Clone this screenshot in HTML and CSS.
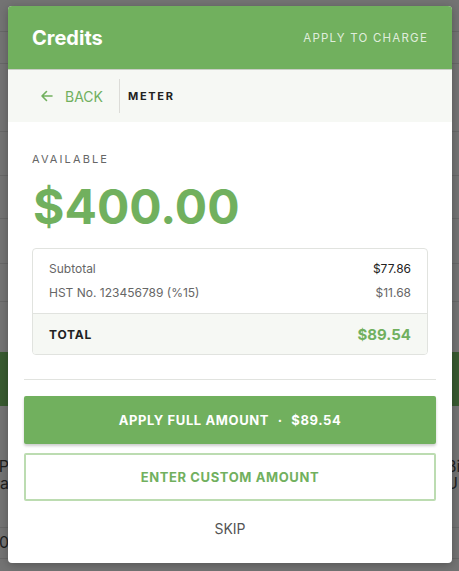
FILE: index.html
```html
<!DOCTYPE html>
<html lang="en">
<head>
  <meta charset="UTF-8">
  <meta name="viewport" content="width=device-width, initial-scale=1.0">
  <title>Credits</title>
  <link rel="stylesheet" href="styles.css">
</head>
<body>
  <!-- dimmed page behind the dialog -->
  <div class="backdrop">
    <div class="bg-line" style="top: 31px"></div>
    <div class="bg-line" style="top: 63px"></div>
    <div class="bg-line" style="top: 131px"></div>
    <div class="bg-line" style="top: 175px"></div>
    <div class="bg-line" style="top: 218px"></div>
    <div class="bg-line" style="top: 263px"></div>
    <div class="bg-line" style="top: 301px"></div>
    <div class="bg-band"></div>
    <div class="bg-line" style="top: 527px"></div>
    <div class="bg-line" style="top: 558px"></div>
    <div class="bg-text bg-left" style="top: 458px">P<br>ea</div>
    <div class="bg-text bg-left" style="top: 534px">0</div>
    <div class="bg-text bg-right" style="top: 458px">Bi<br>U</div>
  </div>

  <div class="modal">
    <div class="modal-header">
      <h1 class="modal-title">Credits</h1>
      <span class="modal-action">APPLY TO CHARGE</span>
    </div>

    <div class="subheader">
      <button class="back-btn">
        <svg width="14" height="14" viewBox="0 0 14 14" fill="none" stroke="currentColor" stroke-width="1.6" stroke-linecap="round" stroke-linejoin="round">
          <path d="M12 7H2M6.5 2.5L2 7l4.5 4.5"/>
        </svg>
        BACK
      </button>
      <span class="crumb">METER</span>
    </div>

    <div class="summary">
      <div class="label">AVAILABLE</div>
      <div class="amount">$400.00</div>

      <div class="breakdown">
        <div class="breakdown-lines">
          <div class="line">
            <span>Subtotal</span>
            <span class="line-strong">$77.86</span>
          </div>
          <div class="line">
            <span>HST No. 123456789 (%15)</span>
            <span>$11.68</span>
          </div>
        </div>
        <div class="total">
          <span class="total-label">TOTAL</span>
          <span class="total-value">$89.54</span>
        </div>
      </div>
    </div>

    <div class="actions">
      <button class="btn btn-primary">APPLY FULL AMOUNT <span class="dot">&middot;</span> $89.54</button>
      <button class="btn btn-outline">ENTER CUSTOM AMOUNT</button>
      <button class="btn-link">SKIP</button>
    </div>
  </div>
</body>
</html>
```

FILE: styles.css
```css
:root {
  --green: #71b05e;
  --green-light: #bcdcb1;
  --panel: #f6f8f4;
  --border: #e1e3df;
  --text: #222222;
  --muted: #666666;
}

* {
  box-sizing: border-box;
}

body {
  width: 459px;
  height: 571px;
  margin: 0;
  padding: 6px 7px 8px 8px;
  font-family: "Inter", "Liberation Sans", sans-serif;
  background: #737373;
  position: relative;
  overflow: hidden;
}

/* Backdrop */
.backdrop {
  position: absolute;
  inset: 0;
  z-index: 0;
}

.bg-line {
  position: absolute;
  left: 0;
  right: 0;
  height: 1px;
  background: #676767;
}

.bg-band {
  position: absolute;
  left: 0;
  right: 0;
  top: 352px;
  height: 54px;
  background: #385a30;
}

.bg-text {
  position: absolute;
  font-size: 16px;
  line-height: 17px;
  color: #1e1e1e;
}

.bg-left {
  right: 450px;
  text-align: right;
}

.bg-right {
  left: 446px;
}

/* Dialog */
.modal {
  position: relative;
  z-index: 1;
  width: 444px;
  height: 557px;
  background: #ffffff;
  border-radius: 4px;
  overflow: hidden;
  display: flex;
  flex-direction: column;
  box-shadow: 0 2px 8px rgba(0, 0, 0, 0.25);
}

.modal-header {
  height: 64px;
  padding: 0 24px;
  display: flex;
  align-items: center;
  justify-content: space-between;
  background: var(--green);
  border-bottom: 1px solid #c9cec5;
}

.modal-title {
  margin: 0;
  font-size: 20px;
  font-weight: 700;
  color: #ffffff;
}

.modal-action {
  font-size: 11.5px;
  letter-spacing: 1.2px;
  color: rgba(255, 255, 255, 0.8);
}

.subheader {
  height: 52px;
  padding: 0 16px;
  display: flex;
  align-items: center;
  background: var(--panel);
}

.back-btn {
  display: flex;
  align-items: center;
  gap: 11px;
  height: 34px;
  padding: 0 16px 0 16px;
  border: none;
  border-right: 1px solid #dcdcd8;
  background: none;
  font-family: inherit;
  font-size: 14px;
  color: var(--green);
  cursor: pointer;
}

.crumb {
  margin-left: 8px;
  font-size: 11px;
  font-weight: 700;
  letter-spacing: 1.7px;
  color: var(--text);
}

.summary {
  margin: 0 16px;
  padding: 30px 8px 24px;
  border-bottom: 1px solid var(--border);
}

.label {
  font-size: 11px;
  letter-spacing: 2.1px;
  color: var(--muted);
}

.amount {
  margin-top: 12px;
  margin-left: 1px;
  font-size: 48px;
  font-weight: 700;
  line-height: 58px;
  color: var(--green);
}

.breakdown {
  margin-top: 12px;
  border: 1px solid var(--border);
  border-radius: 4px;
  overflow: hidden;
}

.breakdown-lines {
  padding: 8px 16px 8px;
}

.line {
  display: flex;
  justify-content: space-between;
  font-size: 12px;
  line-height: 24px;
  color: var(--muted);
}

.line-strong {
  color: var(--text);
}

.total {
  height: 41px;
  padding: 0 16px;
  display: flex;
  align-items: center;
  justify-content: space-between;
  border-top: 1px solid var(--border);
  background: var(--panel);
}

.total-label {
  font-size: 12px;
  font-weight: 700;
  letter-spacing: 0.8px;
  color: var(--text);
}

.total-value {
  font-size: 15px;
  font-weight: 700;
  color: var(--green);
}

.actions {
  padding: 16px 16px 0;
  display: flex;
  flex-direction: column;
  gap: 9px;
}

.btn {
  height: 48px;
  border-radius: 2px;
  font-family: inherit;
  font-size: 13px;
  font-weight: 700;
  letter-spacing: 0.6px;
  cursor: pointer;
}

.btn-primary {
  border: none;
  background: var(--green);
  color: #ffffff;
  box-shadow: 0 2px 3px rgba(0, 0, 0, 0.2);
}

.dot {
  margin: 0 5px;
}

.btn-outline {
  border: 2px solid var(--green-light);
  background: #ffffff;
  color: var(--green);
}

.btn-link {
  height: 36px;
  border: none;
  background: none;
  font-family: inherit;
  font-size: 14px;
  color: #555555;
  cursor: pointer;
}
```
